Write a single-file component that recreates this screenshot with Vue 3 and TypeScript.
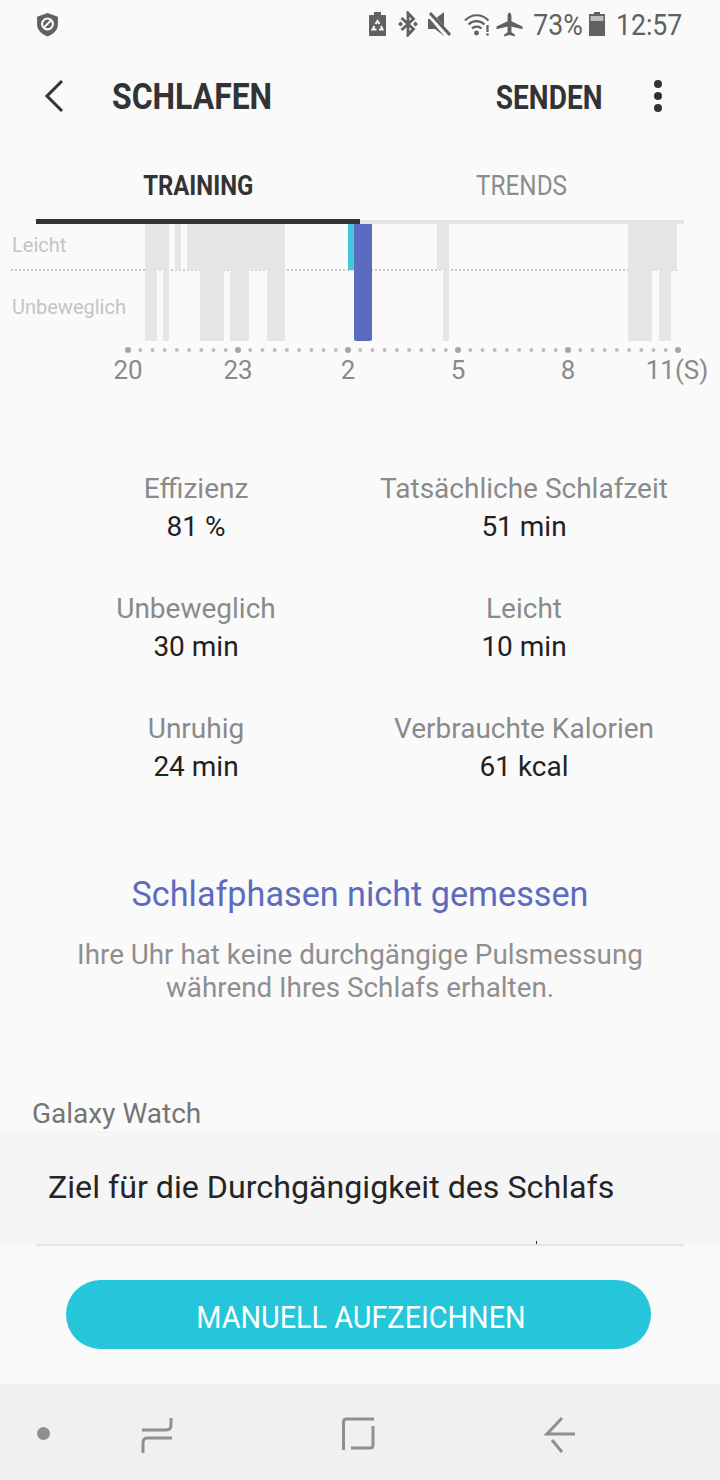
<script setup lang="ts">
type Bar = { x: number; w: number; y: number; h: number }

const top = 0
const mid = 46
const bottom = 117

const light = (x1: number, x2: number): Bar => ({ x: x1, w: x2 - x1, y: top, h: mid - top })
const deep = (x1: number, x2: number): Bar => ({ x: x1, w: x2 - x1, y: mid, h: bottom - mid })

const greyBars: Bar[] = [
  light(145, 169), light(175, 181), light(187, 285), light(437, 449), light(628, 677),
  deep(145, 157), deep(163, 169), deep(200, 224), deep(230, 249), deep(267, 285),
  deep(443, 449), deep(628, 652), deep(659, 671),
]

const dots: { x: number; big: boolean }[] = []
for (let i = 0; i <= 45; i++) {
  dots.push({ x: 128 + (i * 110) / 9, big: i % 9 === 0 })
}

const hours = [
  { x: 128, t: '20' },
  { x: 238, t: '23' },
  { x: 348, t: '2' },
  { x: 458, t: '5' },
  { x: 568, t: '8' },
  { x: 677, t: '11(S)' },
]

const stats = [
  { label: 'Effizienz', value: '81 %' },
  { label: 'Tatsächliche Schlafzeit', value: '51 min' },
  { label: 'Unbeweglich', value: '30 min' },
  { label: 'Leicht', value: '10 min' },
  { label: 'Unruhig', value: '24 min' },
  { label: 'Verbrauchte Kalorien', value: '61 kcal' },
]
</script>

<template>
  <div class="screen">
    <div class="status">
      <svg width="23" height="25" viewBox="0 0 22 24">
        <path d="M11 1 L21 4.5 V12 C21 17.5 16.5 21.5 11 23.5 C5.500 21.500 1 17.500 1 12 V4.500 Z" fill="#616161" />
        <circle cx="11" cy="11.500" r="5.200" fill="none" stroke="#fafafa" stroke-width="2" />
        <path d="M7.500 15 L14.500 8" stroke="#fafafa" stroke-width="2" />
      </svg>
      <div class="statusRight">
        <svg width="17" height="24" viewBox="0 0 17 24">
          <path d="M5 0 H12 V3 H16 Q17 3 17 4 V23 Q17 24 16 24 H1 Q0 24 0 23 V4 Q0 3 1 3 H5 Z" fill="#616161" />
          <path d="M6.500 12 L8.500 9 L10.500 12 M12 14 L13.500 17.500 H10 M7.500 17.500 H3.500 L5.500 14" fill="none" stroke="#fafafa" stroke-width="2" />
        </svg>
        <svg class="ml12" width="20" height="26" viewBox="0 0 20 26">
          <path d="M3.500 7 L15.500 18 L10 24 V2 L15.500 8 L3.500 19" fill="none" stroke="#616161" stroke-width="2.800" />
          <path d="M0 13 L2.500 10.500 L5 13 L2.500 15.500 Z M15 13 L17.500 10.500 L20 13 L17.500 15.500 Z" fill="#616161" />
        </svg>
        <svg class="ml10" width="23" height="24" viewBox="0 0 23 24">
          <path d="M0 7 H7 L16 0 V24 L7 17 H0 Z" fill="#616161" />
          <path d="M0 0 L20 24" stroke="#fafafa" stroke-width="6" />
          <path d="M2 1 L22 23" stroke="#616161" stroke-width="3" />
        </svg>
        <svg class="ml13" width="26" height="23" viewBox="0 0 26 23">
          <path d="M1 7.500 C7.500 0.500 18 0.500 24.500 7.500 M4.500 11.500 C9 7 16 7 20.500 11.500 M8 15.500 C10.500 13 15 13 17.500 15.500" fill="none" stroke="#616161" stroke-width="2.200" />
          <circle cx="12.500" cy="20" r="2.400" fill="#616161" />
          <path d="M23.500 12 V19" stroke="#616161" stroke-width="2.200" />
          <circle cx="23.500" cy="21.500" r="1.300" fill="#616161" />
        </svg>
        <svg class="ml6" width="27" height="25" viewBox="0 0 27 26">
          <path d="M13.500 0.500 C15 0.500 15.500 3 15.500 5 V9.500 L27 15 V18 L15.500 15 V21 L19 23.500 V25.500 L13.500 24 L8 25.500 V23.500 L11.500 21 V15 L0 18 V15 L11.500 9.500 V5 C11.500 3 12 0.500 13.500 0.500 Z" fill="#616161" />
        </svg>
        <span class="pct">73%</span>
        <svg width="16" height="24" viewBox="0 0 16 24">
          <path d="M5 0 H11 V2 H16 V24 H0 V2 H5 Z" fill="#616161" />
          <rect x="1.500" y="4" width="13" height="5" fill="#bdbdbd" />
        </svg>
        <span class="time">12:57</span>
      </div>
    </div>

    <div class="toolbar">
      <svg class="back" width="20" height="34" viewBox="0 0 20 34">
        <path d="M18 2 L3 17 L18 32" fill="none" stroke="#333" stroke-width="3" />
      </svg>
      <span class="title">SCHLAFEN</span>
      <span class="send">SENDEN</span>
      <div class="more">
        <i></i>
        <i></i>
        <i></i>
      </div>
    </div>

    <div class="tabs">
      <div class="tab tabActive"><span>TRAINING</span></div>
      <div class="tab"><span>TRENDS</span></div>
    </div>

    <svg class="chart" width="720" height="166" viewBox="0 0 720 166">
      <line x1="11" x2="677" :y1="mid" :y2="mid" stroke="#c8c8c8" stroke-width="2" stroke-dasharray="2 2" />
      <rect v-for="(b, i) in greyBars" :key="i" :x="b.x" :y="b.y" :width="b.w" :height="b.h" fill="#e5e5e5" />
      <rect x="348" y="0" width="6" height="46" fill="#41c8dd" />
      <path d="M354 0 H372 V115 Q372 117 370 117 H356 Q354 117 354 115 Z" fill="#5c6bc0" />
      <text class="axisName" x="12" y="28">Leicht</text>
      <text class="axisName" x="12" y="90">Unbeweglich</text>
      <circle v-for="d in dots" :key="d.x" :cx="d.x" cy="126" :r="d.big ? 3 : 2" :fill="d.big ? '#a6a6a6' : '#bdbdbd'" />
      <text v-for="h in hours" :key="h.t" class="hour" :x="h.x" y="155" text-anchor="middle">{{ h.t }}</text>
    </svg>

    <div class="stats">
      <div v-for="s in stats" :key="s.label" class="stat">
        <div class="statLabel">{{ s.label }}</div>
        <div class="statValue">{{ s.value }}</div>
      </div>
    </div>

    <h2 class="phaseTitle">Schlafphasen nicht gemessen</h2>
    <p class="phaseText">Ihre Uhr hat keine durchgängige Pulsmessung<br />während Ihres Schlafs erhalten.</p>

    <div class="device">Galaxy Watch</div>
    <div class="goal">Ziel für die Durchgängigkeit des Schlafs</div>
    <div class="divider"><i class="tick"></i></div>

    <div class="action">
      <button class="record" type="button"><span>MANUELL AUFZEICHNEN</span></button>
    </div>

    <div class="nav">
      <i class="navDot"></i>
      <svg class="navRecent" width="34" height="38" viewBox="0 0 34 38">
        <path d="M31 1 V8 Q31 13 26 13 H2 M32 21 H7 Q3 21 3 26 V36" fill="none" stroke="#8f8f8f" stroke-width="3" />
      </svg>
      <svg class="navHome" width="34" height="36" viewBox="0 0 34 36">
        <path d="M2.500 33 V5 Q2.500 2 5.500 2 H33 M32 9 V28 Q32 31 29 31 H10" fill="none" stroke="#8f8f8f" stroke-width="3" />
      </svg>
      <svg class="navBack" width="32" height="36" viewBox="0 0 32 36">
        <path d="M31 17 H3 L18 1 M8 23 L18 35" fill="none" stroke="#8f8f8f" stroke-width="3" />
      </svg>
    </div>
  </div>
</template>

<style scoped>
.screen {
  width: 720px;
  height: 1480px;
  display: flex;
  flex-direction: column;
  overflow: hidden;
  background: #fafafa;
  font-family: Roboto, "Liberation Sans", sans-serif;
}
.status {
  height: 48px;
  flex: none;
  display: flex;
  align-items: center;
  justify-content: space-between;
  padding: 0 38px 0 36px;
  box-sizing: border-box;
}
.statusRight {
  display: flex;
  align-items: center;
}
.ml6 {
  margin-left: 6px;
}
.ml10 {
  margin-left: 10px;
}
.ml12 {
  margin-left: 12px;
}
.ml13 {
  margin-left: 13px;
}
.pct,
.time {
  display: inline-block;
  font-size: 29px;
  color: #616161;
  transform: scaleX(0.92);
}
.pct {
  margin: 2px 4px 0 8px;
}
.time {
  margin: 2px -3px 0 8px;
}
.toolbar {
  height: 96px;
  flex: none;
  display: flex;
  align-items: center;
  padding: 0 58px 0 44px;
}
.back {
  flex: none;
}
.title {
  margin: 2px 0 0 48px;
  font-size: 36px;
  font-weight: 700;
  color: #333;
  transform: scaleX(0.887);
  transform-origin: left center;
}
.send {
  margin: 2px 0 0 auto;
  font-size: 33px;
  font-weight: 700;
  color: #333;
  transform: scaleX(0.85);
  transform-origin: right center;
}
.more {
  margin-left: 52px;
  display: flex;
  flex-direction: column;
  gap: 4px;
}
.more i {
  display: block;
  width: 8px;
  height: 8px;
  border-radius: 50%;
  background: #333;
}
.tabs {
  height: 80px;
  flex: none;
  margin: 0 36px;
  display: flex;
}
.tab {
  flex: 1;
  display: flex;
  justify-content: center;
  padding-top: 24px;
  box-sizing: border-box;
  border-bottom: 4px solid #e6e6e6;
  color: #8c8c8c;
  font-size: 27px;
}
.tab span {
  display: inline-block;
  height: 36px;
  line-height: 36px;
  transform: scaleX(0.9);
}
.tabActive {
  border-bottom: 5px solid #333;
  color: #333;
  font-weight: 700;
}
.tabActive span {
  transform: scaleX(0.885);
}
.chart {
  display: block;
  flex: none;
}
.axisName {
  font-size: 20px;
  fill: #c4c4c4;
}
.hour {
  font-size: 26px;
  fill: #8a8a8a;
}
.stats {
  flex: none;
  margin: 80px 0 0 36px;
  display: grid;
  grid-template-columns: 320px 336px;
  row-gap: 44px;
}
.stat {
  text-align: center;
  white-space: nowrap;
}
.statLabel {
  font-size: 28px;
  line-height: 38px;
  color: #8a8a8a;
}
.statValue {
  font-size: 28px;
  line-height: 38px;
  color: #222;
}
.phaseTitle {
  margin: 86px 0 0;
  font-size: 34.200px;
  line-height: 44px;
  font-weight: 400;
  text-align: center;
  color: #5c6bc0;
}
.phaseText {
  margin: 22px 0 0;
  font-size: 27.800px;
  line-height: 33px;
  text-align: center;
  color: #8f8f8f;
}
.device {
  margin: 93px 0 0 32px;
  font-size: 28px;
  line-height: 34px;
  color: #757575;
}
.goal {
  height: 113px;
  flex: none;
  padding: 0 48px 2px;
  box-sizing: border-box;
  display: flex;
  align-items: center;
  background: #f5f5f5;
  font-size: 32.200px;
  color: #252525;
}
.divider {
  position: relative;
  height: 2px;
  flex: none;
  margin: 0 36px;
  background: #e4e4e4;
}
.tick {
  position: absolute;
  left: 500px;
  top: -3px;
  width: 1px;
  height: 3px;
  background: #333;
}
.action {
  flex: 1;
  display: flex;
  align-items: flex-start;
  justify-content: center;
  padding: 34px 3px 0 0;
}
.record {
  width: 585px;
  height: 69px;
  padding: 5px 0 0 4px;
  border: 0;
  border-radius: 35px;
  background: #26c6da;
  color: #fff;
  font-family: inherit;
  font-size: 32px;
}
.record span {
  display: inline-block;
  transform: scaleX(0.9);
}
.nav {
  position: relative;
  height: 96px;
  flex: none;
  background: #f0f0f0;
}
.navDot {
  position: absolute;
  left: 37px;
  top: 43px;
  width: 13px;
  height: 13px;
  border-radius: 50%;
  background: #8f8f8f;
}
.navRecent {
  position: absolute;
  left: 140px;
  top: 33px;
}
.navHome {
  position: absolute;
  left: 341px;
  top: 33px;
}
.navBack {
  position: absolute;
  left: 544px;
  top: 33px;
}
</style>
